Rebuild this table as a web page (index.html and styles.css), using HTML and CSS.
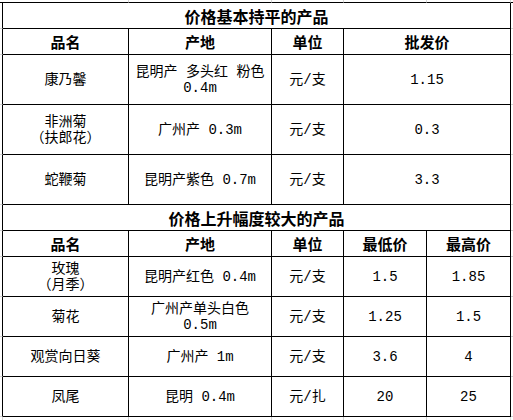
FILE: index.html
```html
<!DOCTYPE html>
<html lang="zh-CN">
<head>
<meta charset="utf-8">
<title>花卉价格</title>
<link rel="stylesheet" href="styles.css">
</head>
<body>
<table class="sheet">
  <colgroup>
    <col class="w-edge-l">
    <col class="w-c1">
    <col class="w-c2">
    <col class="w-c3">
    <col class="w-c4">
    <col class="w-c5">
    <col class="w-edge-r">
  </colgroup>
  <tr class="edge-top">
    <td class="corner"></td>
    <td class="tick"></td><td class="tick"></td><td class="tick"></td><td class="tick"></td><td class="tick"></td>
    <td class="corner"></td>
  </tr>
  <tr class="row-title">
    <td class="side-l"></td>
    <td class="title" colspan="5">价格基本持平的产品</td>
    <td class="side-r"></td>
  </tr>
  <tr class="row-head">
    <td class="side-l"></td>
    <td class="head">品名</td>
    <td class="head">产地</td>
    <td class="head">单位</td>
    <td class="head" colspan="2">批发价</td>
    <td class="side-r"></td>
  </tr>
  <tr class="row-tall">
    <td class="side-l"></td>
    <td>康乃馨</td>
    <td>昆明产 多头红 粉色<br>0.4m</td>
    <td>元/支</td>
    <td colspan="2">1.15</td>
    <td class="side-r"></td>
  </tr>
  <tr class="row-tall">
    <td class="side-l"></td>
    <td>非洲菊<br>（扶郎花）</td>
    <td>广州产 0.3m</td>
    <td>元/支</td>
    <td colspan="2">0.3</td>
    <td class="side-r"></td>
  </tr>
  <tr class="row-tall">
    <td class="side-l"></td>
    <td>蛇鞭菊</td>
    <td>昆明产紫色 0.7m</td>
    <td>元/支</td>
    <td colspan="2">3.3</td>
    <td class="side-r"></td>
  </tr>
  <tr class="row-title">
    <td class="side-l"></td>
    <td class="title" colspan="5">价格上升幅度较大的产品</td>
    <td class="side-r"></td>
  </tr>
  <tr class="row-head">
    <td class="side-l"></td>
    <td class="head">品名</td>
    <td class="head">产地</td>
    <td class="head">单位</td>
    <td class="head">最低价</td>
    <td class="head">最高价</td>
    <td class="side-r"></td>
  </tr>
  <tr class="row-mid">
    <td class="side-l"></td>
    <td>玫瑰<br>（月季）</td>
    <td>昆明产红色 0.4m</td>
    <td>元/支</td>
    <td>1.5</td>
    <td>1.85</td>
    <td class="side-r"></td>
  </tr>
  <tr class="row-mid">
    <td class="side-l"></td>
    <td>菊花</td>
    <td>广州产单头白色<br>0.5m</td>
    <td>元/支</td>
    <td>1.25</td>
    <td>1.5</td>
    <td class="side-r"></td>
  </tr>
  <tr class="row-mid">
    <td class="side-l"></td>
    <td>观赏向日葵</td>
    <td>广州产 1m</td>
    <td>元/支</td>
    <td>3.6</td>
    <td>4</td>
    <td class="side-r"></td>
  </tr>
  <tr class="row-mid">
    <td class="side-l"></td>
    <td>凤尾</td>
    <td>昆明 0.4m</td>
    <td>元/扎</td>
    <td>20</td>
    <td>25</td>
    <td class="side-r"></td>
  </tr>
  <tr class="edge-bottom">
    <td class="tick-b"></td>
    <td class="tick"></td><td class="tick"></td><td class="tick"></td><td class="tick"></td><td class="tick"></td>
    <td class="corner"></td>
  </tr>
</table>
</body>
</html>
```
FILE: styles.css
```css
* {
  box-sizing: border-box;
}

html, body {
  margin: 0;
  padding: 0;
  background: #ffffff;
}

.sheet {
  table-layout: fixed;
  width: 513px;
  border-collapse: separate;
  border-spacing: 0;
  font-family: "Liberation Mono", "Noto Sans CJK SC", monospace;
  font-size: 14px;
  line-height: 16px;
  color: #000000;
}

.w-edge-l { width: 3px; }
.w-c1 { width: 126px; }
.w-c2 { width: 143px; }
.w-c3 { width: 72px; }
.w-c4 { width: 83px; }
.w-c5 { width: 84px; }
.w-edge-r { width: 2px; }

.sheet td {
  padding: 0;
  text-align: center;
  vertical-align: middle;
  white-space: nowrap;
  border-right: 1px solid #000000;
  border-bottom: 1px solid #000000;
}

.edge-top,
.edge-bottom {
  font-size: 0;
  line-height: 0;
}

.edge-top { height: 3px; }
.edge-bottom { height: 4px; }

.edge-top td { border-right-color: #d4d4d4; }
.edge-bottom td { border-bottom: none; border-right-color: #d4d4d4; }

.sheet td.corner {
  border-right: none;
}

.edge-bottom td.corner {
  border-bottom: none;
}

.sheet td.side-l {
  border-bottom-color: #d4d4d4;
}

.sheet td.side-r {
  border-right: none;
  border-bottom-color: #d4d4d4;
}

.row-title { height: 26px; }
.row-head { height: 26px; }
.row-tall { height: 50px; }
.row-mid { height: 40px; }

.title {
  font-family: "Noto Sans CJK SC", sans-serif;
  font-weight: 700;
  font-size: 16px;
}

.head {
  font-family: "Noto Sans CJK SC", sans-serif;
  font-weight: 700;
  font-size: 15px;
}
```
